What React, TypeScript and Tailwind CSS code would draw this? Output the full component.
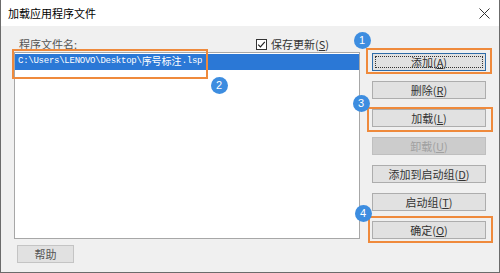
import React from 'react'

const CJK = "font-['Microsoft_YaHei','Noto_Sans_CJK_SC',sans-serif]"

type BtnProps = {
  label: string
  hot: string
  isDefault?: boolean
  disabled?: boolean
}

const DialogButton = ({ label, hot, isDefault, disabled }: BtnProps) => (
  <div
    className={`relative h-[18px] w-[114px] flex items-center justify-center text-[11px] leading-none border ${
      disabled
        ? 'bg-[#cccccc] border-[#bfbfbf] text-[#a0a0a0]'
        : isDefault
        ? 'bg-[#e1e1e1] border-[#2f6ca8] text-[#333]'
        : 'bg-[#e1e1e1] border-[#adadad] text-[#333]'
    }`}
  >
    {isDefault && (
      <span className="absolute inset-[2px] border border-dotted border-[#333]" />
    )}
    <span>
      {label}(<span className="underline">{hot}</span>)
    </span>
  </div>
)

const Marker = ({ n, x, y }: { n: number; x: number; y: number }) => (
  <div
    className="absolute w-[17px] h-[17px] rounded-full bg-[#3d8de0] text-white text-[11px] leading-none flex items-center justify-center font-['Liberation_Sans',sans-serif]"
    style={{ left: x - 8.5, top: y - 8.5 }}
  >
    {n}
  </div>
)

const Callout = ({ x, y, w, h }: { x: number; y: number; w: number; h: number }) => (
  <div
    className="absolute border-2 border-[#ef8a3c]"
    style={{ left: x, top: y, width: w, height: h }}
  />
)

export default function App() {
  const buttons: BtnProps[] = [
    { label: '添加', hot: 'A', isDefault: true },
    { label: '删除', hot: 'R' },
    { label: '加载', hot: 'L' },
    { label: '卸载', hot: 'U', disabled: true },
    { label: '添加到启动组', hot: 'D' },
    { label: '启动组', hot: 'T' },
    { label: '确定', hot: 'O' },
  ]

  return (
    <div className={`relative w-[500px] h-[273px] flex flex-col border-x border-b border-[#6b6b6b] ${CJK}`}>
      {/* title bar */}
      <div className="h-[26px] bg-white flex items-center justify-between pl-[7px] pr-[9px]">
        <span className="text-[11px] text-black">加载应用程序文件</span>
        <svg width="11" height="11" viewBox="0 0 11 11">
          <path d="M0.5 0.5 L10.5 10.5 M10.5 0.5 L0.5 10.5" stroke="#333" strokeWidth="1" />
        </svg>
      </div>

      {/* body */}
      <div className="flex-1 bg-[#f0f0f0] flex">
        <div className="pl-[13px] pt-[10px] flex flex-col w-[359px]">
          <div className="h-[16px] flex items-center justify-between pr-[31px]">
            <span className="pl-[5px] text-[11px] text-[#555]">程序文件名:</span>
            <label className="flex items-center gap-[4px] text-[11px] text-[#333]">
              <svg width="11" height="11" viewBox="0 0 11 11">
                <rect x="0.5" y="0.5" width="10" height="10" fill="white" stroke="#333" />
                <path d="M2.2 5.6 L4.4 7.8 L8.8 2.8" fill="none" stroke="#222" strokeWidth="1.2" />
              </svg>
              <span>
                保存更新(<span className="underline">S</span>)
              </span>
            </label>
          </div>
          <div className="h-[187px] bg-white border border-[#a7a7a7] pt-[1px]">
            <div className="h-[16px] bg-[#2b78d6] text-white flex items-center pl-[3px] text-[9px] tracking-[-0.25px] font-['Liberation_Mono','Noto_Sans_CJK_SC',monospace]">
              C:\Users\LENOVO\Desktop\<span className="text-[10px] tracking-normal">序号标注</span>.lsp
            </div>
          </div>
          <div className="mt-[6px] ml-[3px] w-[57px] h-[18px] bg-[#e1e1e1] border border-[#c4c4c4] flex items-center justify-center text-[11px] text-[#555]">
            帮助
          </div>
        </div>

        <div className="ml-[12px] pt-[27px] flex flex-col gap-[10px]">
          {buttons.map((b) => (
            <DialogButton key={b.label} {...b} />
          ))}
        </div>
      </div>

      {/* annotations */}
      <Callout x={11} y={49} w={196} h={30} />
      <Callout x={365} y={48} w={126} h={26} />
      <Callout x={366} y={107} w={126} h={25} />
      <Callout x={367} y={216} w={125} h={27} />
      <Marker n={1} x={361} y={40} />
      <Marker n={2} x={218} y={85} />
      <Marker n={3} x={360} y={103} />
      <Marker n={4} x={362} y={213} />
    </div>
  )
}
